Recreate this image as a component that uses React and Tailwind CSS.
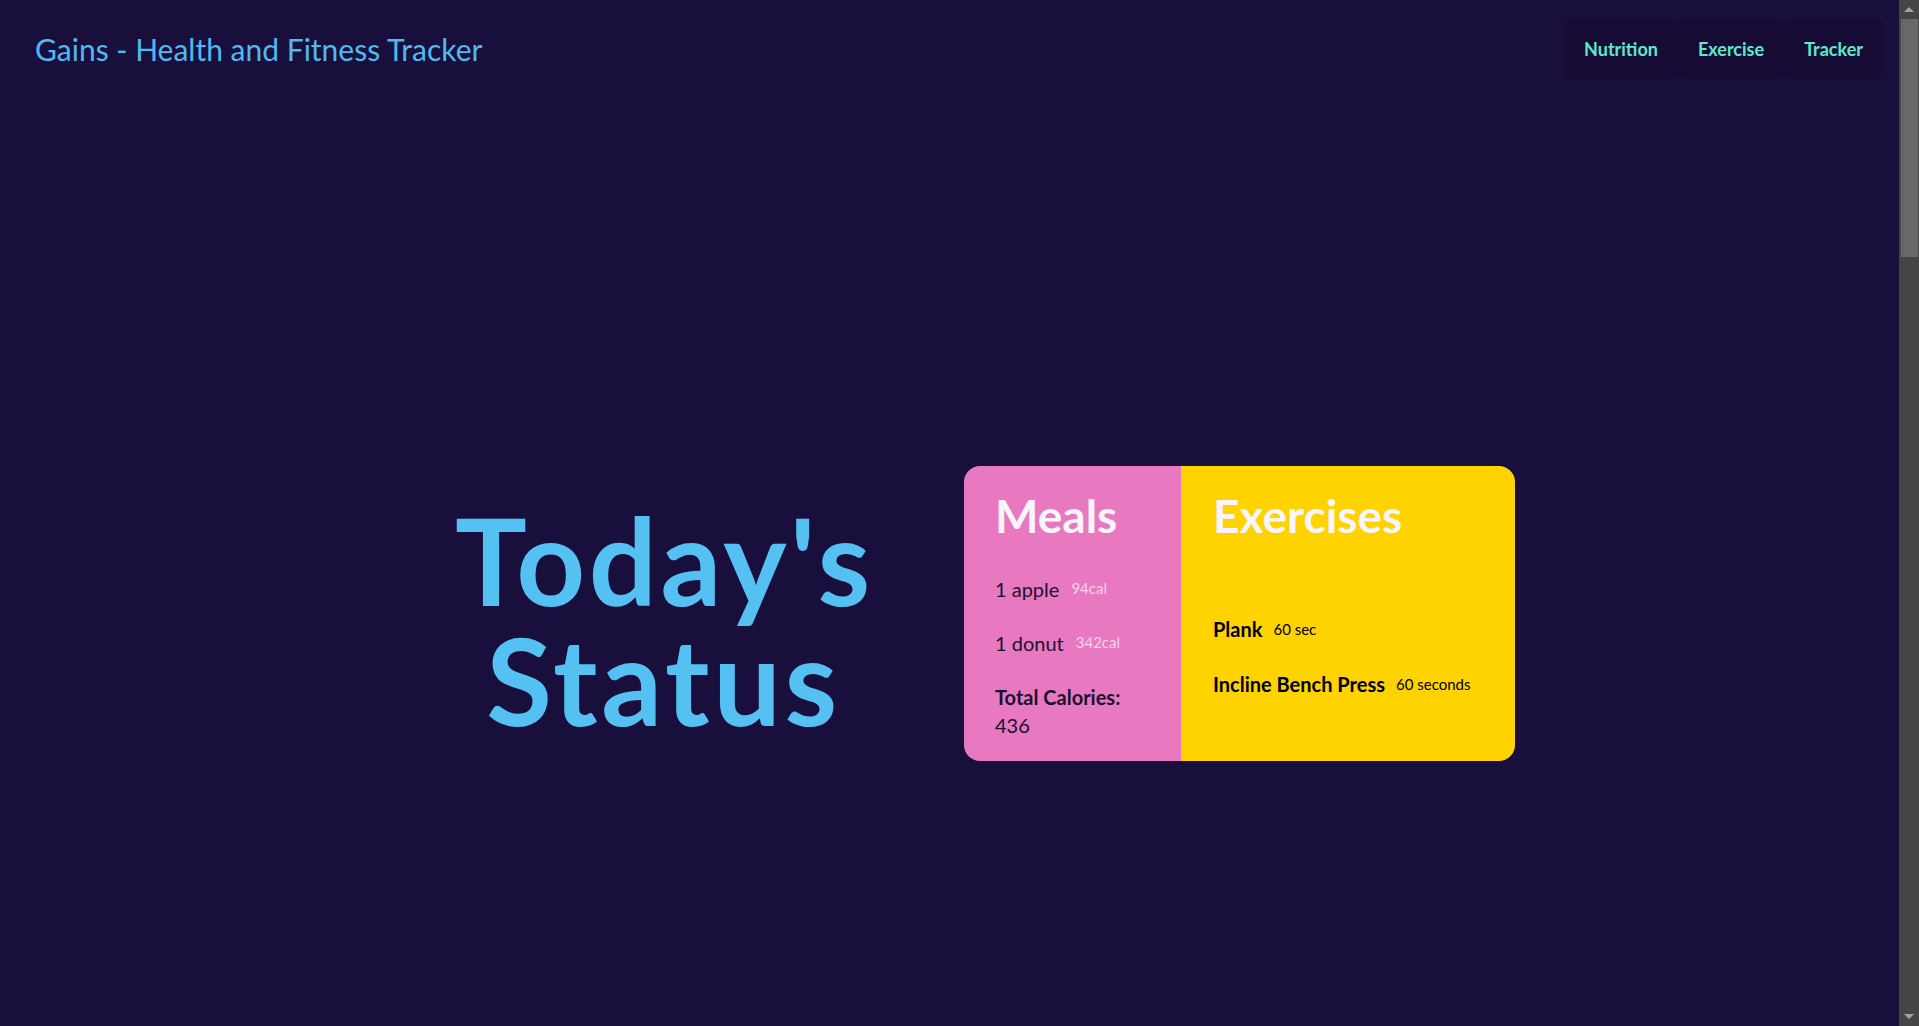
import React from "react";

const meals = [
  { name: "1 apple", cal: 94 },
  { name: "1 donut", cal: 342 },
];

const exercises = [
  { name: "Plank", time: "60 sec" },
  { name: "Incline Bench Press", time: "60 seconds" },
];

export default function App() {
  const total = meals.reduce((sum, m) => sum + m.cal, 0);

  return (
    <div className="flex h-screen overflow-hidden bg-[#190f3d]" style={{ fontFamily: "Lato, 'Open Sans', sans-serif" }}>
      <main className="flex-1 min-w-0">
        {/* header */}
        <header className="h-[98px] flex items-center justify-between pl-[35px] pr-[16px]">
          <span className="text-[30px] text-[#4fb9f0]">Gains - Health and Fitness Tracker</span>
          <nav className="flex">
            {["Nutrition", "Exercise", "Tracker"].map((item) => (
              <a
                key={item}
                className="h-[60px] px-[20px] flex items-center rounded-lg bg-[#160b35] text-[18px] font-bold text-[#5ee9cb] cursor-pointer"
              >
                {item}
              </a>
            ))}
          </nav>
        </header>

        {/* hero */}
        <section className="h-[1026px] flex items-center justify-center gap-[92px] pl-[71px]">
          <h1 className="w-[417px] mt-[18px] text-[120px] leading-[120px] tracking-[0.03em] font-bold text-[#55c1f3] text-center">
            Today's
            <br />
            Status
          </h1>

          <div className="flex rounded-2xl overflow-hidden h-[295px] mt-[4px]">
            <div className="w-[217px] bg-[#e879c0] pl-[31px] pr-[16px] pt-[22px]">
              <h2 className="text-[46px] leading-[56px] font-bold text-[#faf5fc]">Meals</h2>
              <ul className="mt-[18px]">
                {meals.map((m) => (
                  <li key={m.name} className="h-[54px] flex items-center gap-[12px]">
                    <span className="text-[20px] text-[#1c1030]">{m.name}</span>
                    <span className="text-[15px] text-[#fbd0ea]">{m.cal}cal</span>
                  </li>
                ))}
              </ul>
              <p className="mt-[13px] text-[20px] leading-[28px] font-bold text-[#1c1030]">Total Calories:</p>
              <p className="text-[20px] leading-[28px] text-[#1c1030]">{total}</p>
            </div>

            <div className="w-[334px] bg-[#ffd300] pl-[32px] pr-[16px] pt-[22px]">
              <h2 className="text-[46px] leading-[56px] font-bold text-[#faf5fc]">Exercises</h2>
              <ul className="mt-[58px]">
                {exercises.map((e) => (
                  <li key={e.name} className="h-[55px] flex items-center gap-[11px]">
                    <span className="text-[20px] font-bold text-black">{e.name}</span>
                    <span className="text-[15px] text-black">{e.time}</span>
                  </li>
                ))}
              </ul>
            </div>
          </div>
        </section>
      </main>

      {/* browser scrollbar as seen in the shot */}
      <aside className="w-[20px] shrink-0 h-screen bg-[#454545] flex flex-col">
        <div className="h-[19px] flex items-center justify-center">
          <span className="w-0 h-0 border-x-[5px] border-x-transparent border-b-[5px] border-b-[#a3a3a3]" />
        </div>
        <div className="h-[238px] ml-[2px] mr-[1px] bg-[#686868]" />
        <div className="flex-1" />
        <div className="h-[19px] flex items-center justify-center">
          <span className="w-0 h-0 border-x-[5px] border-x-transparent border-t-[5px] border-t-[#a3a3a3]" />
        </div>
      </aside>
    </div>
  );
}
